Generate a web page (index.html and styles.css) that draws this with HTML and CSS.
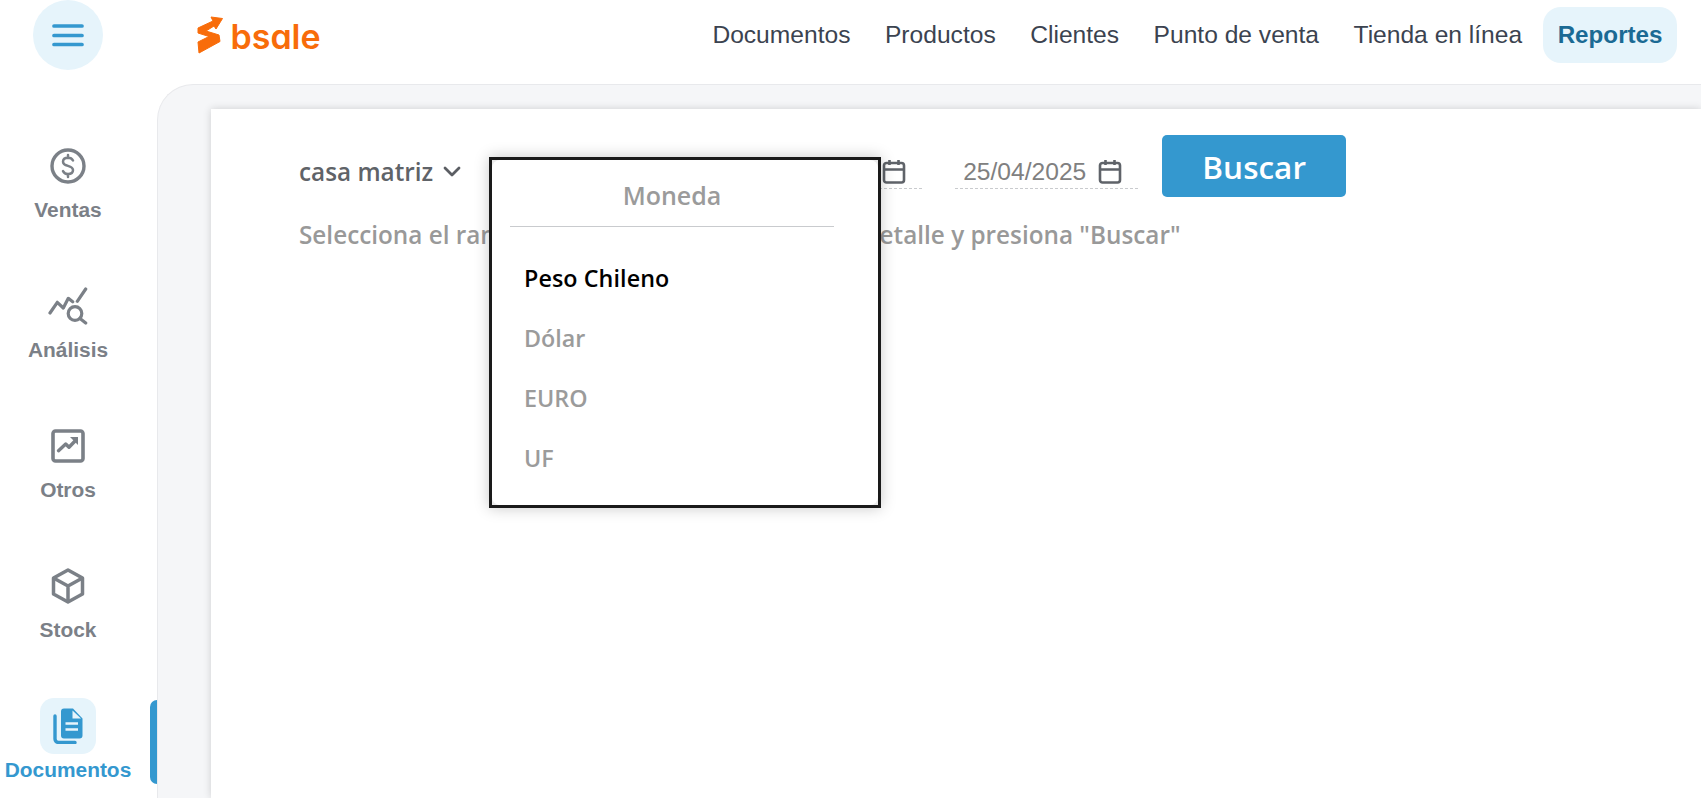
FILE: index.html
```html
<!DOCTYPE html>
<html lang="es">
<head>
<meta charset="utf-8">
<title>Bsale - Reportes</title>
<link rel="stylesheet" href="styles.css">
</head>
<body>
<header class="topbar">
  <button class="menu-btn" aria-label="Menú">
    <svg width="34" height="24" viewBox="0 0 34 24"><path d="M3 3h28M3 12.500h28M3 21.500h28" stroke="#3498cf" stroke-width="3.700" stroke-linecap="round" fill="none"/></svg>
  </button>
  <a class="logo">
    <svg class="logo-mark" width="26" height="38" viewBox="0 0 26 38"><path d="M14 1 25.500 2.500 19 13 17 10 9 15 22 19 23 25.500 2 37 1 26 12 20.500 1 17 1 12 16 5Z" fill="#f86c0a" stroke="#f86c0a" stroke-width="1" stroke-linejoin="round"/></svg>
    <span class="logo-text">bsale</span>
  </a>
  <nav class="topnav">
    <a class="topnav-item">Documentos</a>
    <a class="topnav-item">Productos</a>
    <a class="topnav-item">Clientes</a>
    <a class="topnav-item">Punto de venta</a>
    <a class="topnav-item">Tienda en línea</a>
    <a class="topnav-item active">Reportes</a>
  </nav>
</header>
<div class="layout">
  <aside class="sidebar">
    <a class="side-item">
      <span class="side-icon"><svg width="36" height="36" viewBox="0 0 36 36" fill="none" stroke="#7b8087" stroke-width="3.400"><circle cx="18" cy="18" r="16"/><path d="M23 12.500c-1-2-3-2.800-5-2.800-3 0-5 1.600-5 4 0 5.500 10 2.800 10 8.400 0 2.400-2 4-5 4-2.200 0-4-1-5-3M18 7v3M18 26v3" stroke-width="2.500" stroke-linecap="round"/></svg></span>
      <span class="side-label">Ventas</span>
    </a>
    <a class="side-item">
      <span class="side-icon"><svg width="40" height="38" viewBox="0 0 40 38" fill="none" stroke="#7b8087" stroke-width="3.200" stroke-linecap="round" stroke-linejoin="round"><path d="M2 26 9.300 15.300 15.300 21 20.300 11.300 24.700 14.700M29.300 14.300 37.700 2"/><circle cx="27" cy="26.500" r="6.800"/><path d="M32 31.500l5.700 4.500"/></svg></span>
      <span class="side-label">Análisis</span>
    </a>
    <a class="side-item">
      <span class="side-icon"><svg width="34" height="34" viewBox="0 0 34 34" fill="none" stroke="#7b8087" stroke-width="3.600"><rect x="2" y="2" width="30" height="30" rx="2.500"/><path d="M7.500 21.700 14.700 15 18 18.300 25 11" stroke-width="3.400" stroke-linejoin="round" stroke-linecap="round"/><path d="M19 8H27V16Z" fill="#7b8087" stroke="none"/></svg></span>
      <span class="side-label">Otros</span>
    </a>
    <a class="side-item">
      <span class="side-icon"><svg width="34" height="36" viewBox="0 0 34 36" fill="none" stroke="#7b8087" stroke-width="3.500" stroke-linejoin="round"><path d="M17 2 31.500 10V26L17 34 2.500 26V10Z"/><path d="M2.500 10 17 18 31.500 10M17 18V34"/></svg></span>
      <span class="side-label">Stock</span>
    </a>
    <a class="side-item current">
      <span class="side-icon"><svg width="30" height="36" viewBox="0 0 30 36"><path d="M8 3.500a3 3 0 0 1 3-3h9l9.500 10v17a3 3 0 0 1-3 3H11a3 3 0 0 1-3-3Z" fill="#3498cf"/><path d="M19.500 2.500l8.500 8H19.500Z" fill="#e6f4fb"/><path d="M12.500 15.500H25M12.500 21.500H25" stroke="#e6f4fb" stroke-width="2.600" fill="none"/><path d="M2 8v23a3.500 3.500 0 0 0 3.500 3.500H22" stroke="#3498cf" stroke-width="3.400" fill="none" stroke-linecap="round"/></svg></span>
      <span class="side-label">Documentos</span>
    </a>
  </aside>
  <main class="panel">
    <section class="card">
      <div class="filters">
        <div class="branch">casa matriz
          <svg width="18" height="11" viewBox="0 0 18 11" fill="none" stroke="#5b5e63" stroke-width="2.800" stroke-linecap="round" stroke-linejoin="round"><path d="M2 2l7 7 7-7"/></svg>
        </div>
        <div class="date-field first">
          <span class="date-value">01/04/2025</span>
          <svg class="cal" width="24" height="25" viewBox="0 0 24 25" fill="none" stroke="#5f6369" stroke-width="2.600"><rect x="2" y="4" width="20" height="19.500" rx="2.500"/><path d="M2 10.500h20M7.500 1v5M16.500 1v5"/></svg>
        </div>
        <div class="date-field">
          <span class="date-value">25/04/2025</span>
          <svg class="cal" width="24" height="25" viewBox="0 0 24 25" fill="none" stroke="#5f6369" stroke-width="2.600"><rect x="2" y="4" width="20" height="19.500" rx="2.500"/><path d="M2 10.500h20M7.500 1v5M16.500 1v5"/></svg>
        </div>
        <button class="search-btn">Buscar</button>
        <div class="dropdown">
          <div class="dropdown-inner">
            <div class="dropdown-title">Moneda</div>
            <ul class="dropdown-list">
              <li class="selected">Peso Chileno</li>
              <li>Dólar</li>
              <li>EURO</li>
              <li>UF</li>
            </ul>
          </div>
        </div>
      </div>
      <p class="hint">Selecciona el rango de fechas, monedas, tipo de detalle y presiona "Buscar"</p>
    </section>
  </main>
</div>
</body>
</html>
```

FILE: styles.css
```css
* { box-sizing: border-box; }
html, body { margin: 0; height: 100%; overflow: hidden; background: #fff; }
body { font-family: "Liberation Sans", Arial, sans-serif; }

.topbar { display: flex; align-items: flex-start; height: 84px; padding-left: 33px; padding-right: 24px; }
.menu-btn { width: 70px; height: 70px; border: 0; border-radius: 50%; background: #e6f4fb; display: flex; align-items: center; justify-content: center; padding: 0; }
.logo { display: flex; align-items: center; gap: 7.500px; margin-left: 94px; height: 70px; }
.logo-mark { display: block; }
.logo-text { font-family: "Inter", sans-serif; font-weight: 600; font-size: 34px; font-feature-settings: "cv11"; color: #f86c0a; line-height: 1; margin-top: 3px; }
.topnav { display: flex; align-items: center; gap: 5.5px; margin-left: auto; height: 70px; }
.topnav-item { display: flex; align-items: center; height: 56px; padding: 0 14.5px; font-size: 24.6px; color: #3b4350; border-radius: 18px; }
.topnav-item.active { background: #e6f4fb; color: #1b6a94; font-weight: 700; font-size: 24.2px; margin-left: 1px; }

.layout { display: flex; height: calc(100% - 84px); }
.sidebar { width: 157px; flex: none; display: flex; flex-direction: column; align-items: center; padding-top: 64px; position: relative; }
.side-item { width: 136px; margin-right: 21px; height: 140px; flex: none; display: flex; flex-direction: column; align-items: center; color: #7b8087; font-weight: 700; font-size: 20.9px; }
.side-icon { height: 36px; display: flex; align-items: center; justify-content: center; }
.side-label { margin-top: 14px; line-height: 24px; white-space: nowrap; }
.side-item.current { color: #3498cf; margin-top: -10px; height: 90px; position: relative; }
.side-item.current .side-icon { width: 56px; height: 56px; background: #e6f4fb; border-radius: 14px; }
.side-item.current .side-label { margin-top: 4px; }
.side-item.current::after { content: ""; position: absolute; left: 150px; top: 2px; width: 7px; height: 84px; background: #3498cf; border-radius: 7px 0 0 7px; }

.panel { flex: 1; background: #f5f6f8; border-top: 1px solid #e8e9ec; border-left: 1px solid #e8e9ec; border-top-left-radius: 36px; padding: 24px 0 0 53px; min-width: 0; }
.card { background: #fff; height: 100%; padding: 26px 0 0 88px; box-shadow: 0 0 8px rgba(0,0,0,.16); }
.filters { display: flex; align-items: flex-start; position: relative; height: 62px; }
.branch { display: flex; align-items: center; gap: 10px; margin-top: 20px; font-family: "Open Sans", sans-serif; font-weight: 600; font-size: 24.3px; line-height: 33px; color: #5f6368; white-space: nowrap; }
.date-field { display: flex; align-items: center; gap: 12px; width: 183px; height: 38px; margin-top: 16px; margin-left: 33px; padding: 4px 0 0 8px; border-bottom: 1px dashed #c9cbce; }
.date-field.first { margin-left: 278px; }
.date-value { font-size: 24.6px; color: #808080; }
.cal { flex: none; }
.search-btn { width: 184px; height: 62px; margin-left: 24px; border: 0; border-radius: 5px; background: #3498cf; color: #fff; font-family: "Open Sans", sans-serif; font-weight: 600; font-size: 31.5px; padding: 0; }
.dropdown { position: absolute; left: 190px; top: 22px; width: 392px; height: 351px; background: #ececec; border: 3px solid #1a1a1a; box-shadow: 0 0 14px rgba(0,0,0,.22); font-family: "Open Sans", sans-serif; font-weight: 600; }
.dropdown-inner { height: 100%; background: #fff; border-radius: 8px; padding: 0 19px; }
.dropdown-title { height: 67px; line-height: 70px; text-align: center; font-size: 25px; color: #9b9b9b; border-bottom: 1px solid #c9cbce; margin: 0 25px 0 -1px; }
.dropdown-list { list-style: none; margin: 21px 0 0; padding: 0 0 0 13px; }
.dropdown-list li { height: 60px; line-height: 60px; font-size: 23.300px; color: #9b9b9b; }
.dropdown-list li.selected { color: #000; font-weight: 550; letter-spacing: .08px; }
.hint { margin: 22px 0 0; font-family: "Open Sans", sans-serif; font-weight: 600; font-size: 24.3px; line-height: 32px; color: #999; white-space: nowrap; }
```
